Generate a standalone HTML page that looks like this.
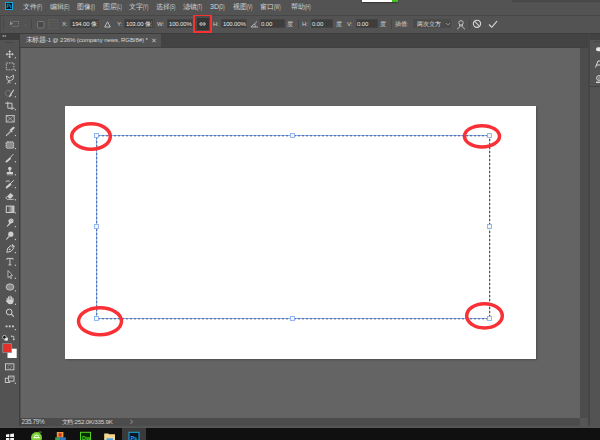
<!DOCTYPE html>
<html><head><meta charset="utf-8">
<style>
*{margin:0;padding:0;box-sizing:border-box}
html,body{width:600px;height:440px;overflow:hidden;background:#535353;font-family:"Liberation Sans",sans-serif;}
.a{position:absolute}
.t{position:absolute;white-space:nowrap;color:#d6d6d6;font-size:7px;line-height:8px}
.m{position:absolute;white-space:nowrap;color:#d4d4d4;font-size:7px;line-height:8px;top:3px}
.m span{font-size:6.5px;display:inline-block;transform:scaleX(0.62);transform-origin:0 50%;vertical-align:top}
.o{position:absolute;white-space:nowrap;color:#cfcfcf;font-size:6px;line-height:7px;top:20.5px;letter-spacing:-0.15px}
.o.v{color:#e6e6e6}
.inp{position:absolute;top:19px;height:9px;background:#3d3d3d;border:1px solid #444}
.sep{position:absolute;top:19px;width:1px;height:10px;background:#474747}
</style></head><body>
<!-- regions -->
<div class="a" style="left:0;top:0;width:600px;height:15px;background:#535353"></div>
<div class="a" style="left:0;top:15px;width:600px;height:1px;background:#474747"></div>
<div class="a" style="left:0;top:16px;width:600px;height:17px;background:#535353"></div>
<div class="a" style="left:0;top:16px;width:1px;height:17px;background:#4a4a4a"></div>
<div class="a" style="left:0;top:33px;width:600px;height:1px;background:#3c3c3c"></div>
<div class="a" style="left:20px;top:34px;width:569px;height:13px;background:#434343"></div>
<div class="a" style="left:20px;top:47px;width:569px;height:1px;background:#404040"></div>
<div class="a" style="left:0;top:34px;width:19px;height:392px;background:#535353"></div>
<div class="a" style="left:0;top:34px;width:19px;height:6px;background:#3e3e3e"></div>
<div class="a" style="left:19px;top:34px;width:1px;height:392px;background:#3e3e3e"></div>
<div class="a" style="left:20px;top:48px;width:560px;height:370px;background:#646464"></div>
<div class="a" style="left:20px;top:48px;width:1px;height:370px;background:#525252"></div>
<div class="a" style="left:580px;top:48px;width:8px;height:370px;background:#4c4c4c"></div><div class="a" style="left:580px;top:418px;width:8px;height:8px;background:#555"></div>
<div class="a" style="left:588px;top:34px;width:2px;height:392px;background:#454545"></div>
<div class="a" style="left:590px;top:34px;width:10px;height:392px;background:#535353"></div>
<div class="a" style="left:590px;top:34px;width:10px;height:6px;background:#424242"></div>
<div class="a" style="left:590px;top:86px;width:10px;height:1px;background:#424242"></div>
<div class="a" style="left:20px;top:418px;width:560px;height:8px;background:#4c4c4c"></div>
<div class="a" style="left:0;top:426px;width:600px;height:2px;background:#555"></div>
<div class="a" style="left:0;top:428px;width:600px;height:12px;background:#0f100f"></div>

<!-- rpanel icons -->
<svg class="a" style="left:588px;top:34px" width="12" height="60">
  <path d="M6 7.7 H12" stroke="#474747" stroke-width="1"/>
  <rect x="8" y="13.3" width="6" height="4" rx="2" fill="#e6e6e6"/>
  <path d="M7.5 33.5 L10 27 H12 M8.6 31 H12" stroke="#dcdcdc" stroke-width="1" fill="none"/>
  <circle cx="11" cy="44" r="2.4" fill="none" stroke="#d8d8d8" stroke-width="1"/>
  <path d="M11 42.5 V45.5" stroke="#d8d8d8" stroke-width="0.8"/>
  <rect x="8" y="47.6" width="5" height="1.3" fill="#e0e0e0"/>
</svg>
<!-- top overlay -->
<div class="a" style="left:362px;top:0;width:36px;height:1.5px;background:#fff;box-shadow:0 0.5px 1.5px rgba(0,0,0,.6)"></div>
<div class="a" style="left:392px;top:0;width:6px;height:1.5px;background:#3fc41c"></div>
<div class="a" style="left:512px;top:0;width:88px;height:1px;background:#4a4a4a;box-shadow:0 0.5px 1px rgba(0,0,0,.3)"></div>
<!-- toolbar -->
<svg class="a" style="left:0;top:0" width="20" height="440"><path d="M3.2 35 V37 M5.2 35 V37" stroke="#bbb" stroke-width="0.9"/><path d="M5 42.5 H14" stroke="#474747" stroke-width="1"/><g stroke="#cfcfcf" stroke-width="0.9" fill="none"><path d="M6.3 54.2 H13.1 M9.7 50.800000000000004 V57.800000000000004"/></g><g fill="#cfcfcf"><path d="M9.7 50.2 L8.2 51.900000000000006 H11.2Z M9.7 58.2 L8.2 56.5 H11.2Z M5.7 54.2 L7.4 52.7 V55.7Z M13.7 54.2 L12 52.7 V55.7Z"/></g><rect x="14.8" y="57.2" width="1.2" height="1.2" fill="#c4c4c4"/><rect x="6.3" y="63.0" width="7.6" height="6.8" fill="none" stroke="#cfcfcf" stroke-width="0.9" stroke-dasharray="1.5 1.1"/><rect x="14.8" y="69.7" width="1.2" height="1.2" fill="#c4c4c4"/><path d="M6.3 75.9 L9.4 77.9 L13.6 75.1 L13.2 79.1 L10.2 80.9 Q8.6 81.0 7.2 79.7 L6.3 75.9 M9.6 79.9 L7.6 83.5 M8.2 81.3 L10.6 83.1" fill="none" stroke="#cfcfcf" stroke-width="0.85"/><rect x="14.8" y="83.0" width="1.2" height="1.2" fill="#c4c4c4"/><circle cx="8.3" cy="93.3" r="2.9" fill="none" stroke="#a8a8a8" stroke-width="0.75" stroke-dasharray="1 0.8"/><path d="M10 95.5 L13.8 89.69999999999999" stroke="#cfcfcf" stroke-width="1.1"/><path d="M10.6 94.5 L9.6 96.69999999999999 L11.4 95.1Z" fill="#cfcfcf" stroke="#cfcfcf" stroke-width="1"/><rect x="14.8" y="96.2" width="1.2" height="1.2" fill="#c4c4c4"/><path d="M5.2 103.19999999999999 H12 V108.19999999999999 H14.4 M7.8 101.6 V108.19999999999999 H12 M12 108.19999999999999 V109.8" fill="none" stroke="#cfcfcf" stroke-width="0.95"/><rect x="14.8" y="109.0" width="1.2" height="1.2" fill="#c4c4c4"/><rect x="6.2" y="115.39999999999999" width="8" height="6.6" fill="none" stroke="#cfcfcf" stroke-width="0.85"/><path d="M6.2 115.39999999999999 L14.2 122.0 M14.2 115.39999999999999 L6.2 122.0" stroke="#b0b0b0" stroke-width="0.7"/><path d="M11.4 129.8 L13.6 127.80000000000001" stroke="#cfcfcf" stroke-width="2.2" stroke-linecap="round"/><path d="M9.9 129.60000000000002 L12.3 132.20000000000002" stroke="#cfcfcf" stroke-width="1.1"/><path d="M10.6 130.9 L6.6 134.9 L6.2 135.8 L7.1 135.4 L11.1 131.4" fill="none" stroke="#cfcfcf" stroke-width="0.9"/><rect x="14.8" y="134.89999999999998" width="1.2" height="1.2" fill="#c4c4c4"/><rect x="6.2" y="141.9" width="7.4" height="6.4" rx="1.3" fill="#8c8c8c" stroke="#cfcfcf" stroke-width="1.1" stroke-dasharray="1.3 0.7"/><rect x="14.8" y="148.0" width="1.2" height="1.2" fill="#c4c4c4"/><path d="M13.5 154 L9.3 158.6" stroke="#cfcfcf" stroke-width="0.9"/><path d="M9.8 158.1 L6 161.6 L6.5 162 L10.3 158.9Z" fill="#cfcfcf" stroke="#cfcfcf" stroke-width="1.1" stroke-linejoin="round"/><rect x="14.8" y="161.2" width="1.2" height="1.2" fill="#c4c4c4"/><circle cx="9.8" cy="168.6" r="1.8" fill="#cfcfcf"/><path d="M9.8 170 V172" stroke="#cfcfcf" stroke-width="1.2"/><rect x="6.8" y="172" width="6.2" height="2.2" fill="#cfcfcf"/><rect x="6.8" y="174.4" width="6.2" height="0.9" fill="#9a9a9a"/><rect x="14.8" y="174.2" width="1.2" height="1.2" fill="#c4c4c4"/><path d="M13.8 180.20000000000002 L9.6 184.4" stroke="#cfcfcf" stroke-width="1"/><path d="M10.2 183.8 L6.6 187.10000000000002 L6.4 187.8 L7.2 187.60000000000002 L10.8 184.60000000000002Z" fill="#cfcfcf" stroke="#cfcfcf" stroke-width="1.3" stroke-linejoin="round"/><path d="M5.8 181.60000000000002 Q7.6 180.4 9.6 181.20000000000002" stroke="#cfcfcf" stroke-width="1" fill="none"/><path d="M11.8 187.4 L13.9 185.0" stroke="#8f8f8f" stroke-width="0.8" stroke-dasharray="0.8 0.7"/><rect x="14.8" y="187.1" width="1.2" height="1.2" fill="#c4c4c4"/><path d="M10.5 192.9 L13.6 195.70000000000002 L10 199.10000000000002 L7 196.4 Z" fill="#cfcfcf"/><path d="M7 196.4 L5.8 197.9 L7.2 199.3 H13.8" stroke="#cfcfcf" stroke-width="0.9" fill="none"/><rect x="14.8" y="199.2" width="1.2" height="1.2" fill="#c4c4c4"/><defs><linearGradient id="gr" x1="0" x2="1"><stop offset="0" stop-color="#333"/><stop offset="1" stop-color="#d5d5d5"/></linearGradient></defs><rect x="6.3" y="206.10000000000002" width="7.6" height="6.4" fill="url(#gr)" stroke="#cfcfcf" stroke-width="1"/><rect x="14.8" y="212.29999999999998" width="1.2" height="1.2" fill="#c4c4c4"/><path d="M8.4 220.5 Q9.4 218.39999999999998 11.6 218.5 Q13.6 218.7 13.6 220.89999999999998 Q13.4 223.1 11.2 223.29999999999998 L7.2 226.79999999999998 L6.6 226.2 L9.3 222.89999999999998 Q8.2 221.89999999999998 8.4 220.5Z" fill="#cfcfcf"/><path d="M10 219.5 L11.2 221.89999999999998 M11.6 219.1 L12.6 221.29999999999998" stroke="#7a7a7a" stroke-width="0.5"/><rect x="14.8" y="226.0" width="1.2" height="1.2" fill="#c4c4c4"/><circle cx="10.8" cy="234.2" r="2.6" fill="#cfcfcf"/><path d="M9 236.3 L6.3 239.5" stroke="#cfcfcf" stroke-width="1.1"/><rect x="14.8" y="238.89999999999998" width="1.2" height="1.2" fill="#c4c4c4"/><path d="M6.8 252.29999999999998 L7.8 248.1 L11 245.5 L13.7 248.2 L11 251.39999999999998 Z" fill="none" stroke="#cfcfcf" stroke-width="1"/><circle cx="9.8" cy="249.29999999999998" r="0.9" fill="#cfcfcf"/><path d="M12 244.5 L14.5 247.1" stroke="#cfcfcf" stroke-width="1.2"/><rect x="14.8" y="252.0" width="1.2" height="1.2" fill="#c4c4c4"/><path d="M6.9 259.8 V258.40000000000003 H13 V259.8 M9.95 258.40000000000003 V265.0 M8.5 264.90000000000003 H11.4" stroke="#cfcfcf" stroke-width="0.95" fill="none"/><rect x="14.8" y="264.7" width="1.2" height="1.2" fill="#c4c4c4"/><path d="M8 270.5 L12.6 275.7 L10.4 275.7 L11.6 278.3 L10.6 278.7 L9.5 276.3 L8 277.7Z" fill="#3a3a3a" stroke="#cfcfcf" stroke-width="0.8"/><rect x="14.8" y="277.7" width="1.2" height="1.2" fill="#c4c4c4"/><ellipse cx="10" cy="287" rx="3.9" ry="3.2" fill="#8a8a8a" stroke="#cfcfcf" stroke-width="0.8"/><rect x="14.8" y="290.3" width="1.2" height="1.2" fill="#c4c4c4"/><path d="M7.2 301 V298.2 M8.6 300 V296.7 M10.1 300 V296.1 M11.6 300 V296.7 M13 300.6 V298.2" stroke="#cfcfcf" stroke-width="1.05" stroke-linecap="round"/><path d="M7.4 299.8 H13.4 V301.8 Q13.2 304.3 10.4 304.3 Q8.5 304.3 7.3 302.8 L5.8 300.8 Q6.4 299.8 7.4 300.6Z" fill="#cfcfcf"/><rect x="14.8" y="303.7" width="1.2" height="1.2" fill="#c4c4c4"/><circle cx="9.2" cy="312" r="2.9" fill="none" stroke="#cfcfcf" stroke-width="1"/><path d="M11.3 314.1 L13.8 316.6" stroke="#cfcfcf" stroke-width="1.2"/><path d="M5.6 326.4 H7.5 M8.8 326.4 H10.7 M12 326.4 H13.9" stroke="#cfcfcf" stroke-width="1.6"/><rect x="14.8" y="329.0" width="1.2" height="1.2" fill="#c4c4c4"/><rect x="4.6" y="337.6" width="3.2" height="3" fill="#f2f2f2"/><circle cx="4.4" cy="337.2" r="1.8" fill="#111" stroke="#e8e8e8" stroke-width="0.7"/><path d="M11.4 336.3 H13.8 V339.5" stroke="#d0d0d0" stroke-width="0.8" fill="none"/><path d="M12.6 339 L13.8 340.6 L15 339Z M12 335.1 L11 336.3 L12 337.5Z" fill="#d0d0d0"/><rect x="7.5" y="348.7" width="9.2" height="9.3" fill="#ffffff"/><rect x="2.7" y="343.6" width="8.9" height="8.9" fill="#e3312a" stroke="#8a8f8f" stroke-width="0.8"/><rect x="5.5" y="363.8" width="8.4" height="6" fill="none" stroke="#cfcfcf" stroke-width="0.9"/><circle cx="9.7" cy="366.8" r="1.8" fill="none" stroke="#b0b0b0" stroke-width="0.8" stroke-dasharray="0.8 0.7"/><rect x="5.3" y="378.2" width="4.4" height="4.3" fill="none" stroke="#cfcfcf" stroke-width="0.9"/><rect x="8.4" y="376.1" width="5.6" height="5" fill="#535353" stroke="#cfcfcf" stroke-width="0.9"/><path d="M9 377.9 H13.4" stroke="#9a9a9a" stroke-width="0.9"/><rect x="14.8" y="382.7" width="1.2" height="1.2" fill="#c4c4c4"/></svg>
<!-- /toolbar -->
<!-- menu -->
<div class="a" style="left:5px;top:2px;width:8px;height:8px;background:#061820;border:1px solid #1aa3dc"></div>
<svg class="a" style="left:6px;top:3px" width="6" height="6"><path d="M1.2 5 V1.2 H2.6 Q3.6 1.2 3.6 2.2 Q3.6 3.2 2.6 3.2 H1.2 M5.2 2.4 Q4.2 2.2 4.2 3 Q4.4 3.6 5 3.8 Q5.4 4.6 4.2 4.8" fill="none" stroke="#1aa8e0" stroke-width="0.8"/></svg>
<div class="m" style="left:23px">文件<span>(F)</span></div>
<div class="m" style="left:50px">编辑<span>(E)</span></div>
<div class="m" style="left:77px">图像<span>(I)</span></div>
<div class="m" style="left:103px">图层<span>(L)</span></div>
<div class="m" style="left:129px">文字<span>(Y)</span></div>
<div class="m" style="left:156px">选择<span>(S)</span></div>
<div class="m" style="left:183px">滤镜<span>(T)</span></div>
<div class="m" style="left:210px">3D<span>(D)</span></div>
<div class="m" style="left:233px">视图<span>(V)</span></div>
<div class="m" style="left:260px">窗口<span>(W)</span></div>
<div class="m" style="left:291px">帮助<span>(H)</span></div>

<!-- options bar -->
<div class="sep" style="left:3px"></div>
<div class="sep" style="left:31px"></div>
<div class="sep" style="left:154px"></div>
<div class="sep" style="left:246px"></div>
<div class="sep" style="left:298px"></div>
<div class="sep" style="left:391px"></div>
<div class="sep" style="left:469px"></div>
<svg class="a" style="left:0;top:15px" width="600" height="17">
  <g fill="none" stroke="#8a8a8a" stroke-width="0.9">
    <path d="M10 6.3 L10 10.5 L13.2 8.4 Z" fill="#8f8f8f" stroke="none"/>
    <path d="M12.5 6.5 H18.5 M12.5 11.5 H18.5 M18.5 6 V12" stroke-dasharray="1 1"/>
    <path d="M24 9.5 L25.5 10.8 L27 9.5" stroke="#626262"/>
    <rect x="37.5" y="6.5" width="6.5" height="6.5" rx="0.8" fill="#4a4a4a" stroke="#7c7c7c"/>
    <rect x="48.5" y="4.5" width="9" height="9" stroke="#666" stroke-dasharray="1 1"/>
    <path d="M51.5 5 V13 M54.5 5 V13 M49 7.5 H57 M49 10.5 H57" stroke="#5e5e5e" stroke-dasharray="1 1"/>
  </g>
</svg>
<div class="o" style="left:62px">X:</div>
<div class="inp" style="left:70px;width:29px"></div>
<div class="o v" style="left:72px;width:26px;overflow:hidden">194.00 像素</div>
<svg class="a" style="left:104px;top:21px" width="7" height="7"><path d="M3.5 0.8 L6.3 6 H0.7 Z" fill="none" stroke="#bdbdbd" stroke-width="1"/></svg>
<div class="o" style="left:117px">Y:</div>
<div class="inp" style="left:124px;width:29px"></div>
<div class="o v" style="left:126px;width:26px;overflow:hidden">103.00 像素</div>
<div class="o" style="left:157px">W:</div>
<div class="inp" style="left:167px;width:26px"></div>
<div class="o v" style="left:169px">100.00%</div>
<div class="a" style="left:193px;top:15px;width:19px;height:18px;border:2px solid #fb3030"></div>
<div class="a" style="left:195px;top:16px;width:15px;height:15px;border:1px solid #474c4c;background:#4a4a4a"></div>
<div class="a" style="left:197px;top:18px;width:11.5px;height:12px;background:#343434"></div>
<svg class="a" style="left:199px;top:22px" width="8" height="4"><g fill="none" stroke="#dcdcdc" stroke-width="0.9"><path d="M3.2 0.9 H1.8 Q0.8 0.9 0.8 2 Q0.8 3.1 1.8 3.1 H3.2 M4.2 0.9 H5 Q6.4 0.9 6.4 2 Q6.4 3.1 5 3.1 H4.2 M2.5 2 H4.6"/></g></svg>
<div class="o" style="left:213px">H:</div>
<div class="inp" style="left:221px;width:25px"></div>
<div class="o v" style="left:223px">100.00%</div>
<svg class="a" style="left:250px;top:20px" width="9" height="8"><path d="M1 7 H8 M1 7 L7 1.5 M4.5 4 Q5.5 5.5 5.2 7" fill="none" stroke="#bdbdbd" stroke-width="0.9"/></svg>
<div class="inp" style="left:260px;width:25px"></div>
<div class="o v" style="left:261px">0.00</div>
<div class="o" style="left:287px">度</div>
<div class="o" style="left:302px">H:</div>
<div class="inp" style="left:311px;width:22px"></div>
<div class="o v" style="left:312px">0.00</div>
<div class="o" style="left:336px">度</div>
<div class="o" style="left:347px">V:</div>
<div class="inp" style="left:356px;width:22px"></div>
<div class="o v" style="left:357px">0.00</div>
<div class="o" style="left:380px">度</div>
<div class="o" style="left:395px">插值:</div>
<div class="inp" style="left:413px;width:38px;background:#4a4a4a;border-color:#4a4a4a"></div>
<div class="o v" style="left:417px">两次立方</div>
<svg class="a" style="left:445px;top:22px" width="6" height="4"><path d="M1 1 L3 3 L5 1" fill="none" stroke="#9a9a9a" stroke-width="0.8"/></svg>
<svg class="a" style="left:456px;top:20px" width="11" height="10"><g fill="none" stroke="#c8c8c8" stroke-width="0.9"><circle cx="5" cy="2.8" r="2.2"/><path d="M3.5 4.5 L3.5 6 H6.5 V4.5 M1 9.3 L4 6.5 M9 9.3 L6 6.5"/></g></svg>
<svg class="a" style="left:472px;top:19px" width="10" height="10"><g fill="none" stroke="#d8d8d8" stroke-width="1.1"><circle cx="5" cy="4.8" r="3.6"/><path d="M2.6 2.4 L7.4 7.2"/></g></svg>
<svg class="a" style="left:488px;top:20px" width="10" height="9"><path d="M1 4.5 L3.8 7.3 L9 1.2" fill="none" stroke="#dcdcdc" stroke-width="1.1"/></svg>

<!-- tab -->
<div class="a" style="left:20px;top:34px;width:141px;height:13px;background:#535353"></div>
<div class="t" style="left:25.6px;top:36px;color:#d8d8d8;font-size:6px;line-height:8px;letter-spacing:-0.07px"><span style="font-size:7px;letter-spacing:-0.3px">未标题</span>-1 @ 236% (company news, RGB/8#) *</div>
<svg class="a" style="left:151px;top:38px" width="6" height="5"><path d="M1.3 0.8 L4.7 4.2 M4.7 0.8 L1.3 4.2" stroke="#c8c8c8" stroke-width="1"/></svg>

<!-- document -->
<div class="a" style="left:65px;top:106px;width:471px;height:253px;background:#fff;box-shadow:0.5px 1px 2px rgba(0,0,0,.25)"></div>

<svg class="a" style="left:0;top:0" width="600" height="440">
  <g shape-rendering="crispEdges" fill="none" stroke-width="1">
    <path d="M96 135.5 H490 M96 318.5 H490 M96.5 135 V319" stroke="#86acf2"/><path d="M489.5 135 V319" stroke="#bcd2f8"/>
    <path d="M94 136.5 H490 M94 319.5 H490" stroke="#cdcdcd" stroke-dasharray="2 2"/>
    <path d="M97.5 133 V319 M490.5 135 V319" stroke="#cfcfcf" stroke-dasharray="2 2"/>
    <path d="M94 135.5 H490 M94 318.5 H490" stroke="#5874aa" stroke-dasharray="2 2"/>
    <path d="M96.5 133 V319" stroke="#5b76a6" stroke-dasharray="2 2"/>
    <path d="M489.5 135 V319" stroke="#44557c" stroke-dasharray="2 2"/>
  </g>
  <g fill="#f6f6ee" stroke="#8ab2f4" stroke-width="0.9">
    <rect x="94.5" y="133.5" width="4" height="4"/>
    <rect x="290.5" y="133.5" width="4" height="4"/>
    <rect x="487.5" y="133.5" width="4" height="4"/>
    <rect x="94.5" y="224.5" width="4" height="4"/>
    <rect x="487.5" y="224.5" width="4" height="4"/>
    <rect x="94.5" y="316.5" width="4" height="4"/>
    <rect x="290.5" y="316.5" width="4" height="4"/>
    <rect x="487.5" y="316.5" width="4" height="4"/>
  </g>
  <g fill="none" stroke="#f93036" stroke-width="3.5">
    <ellipse cx="91" cy="136.5" rx="19.3" ry="12.8"/>
    <ellipse cx="482" cy="136.3" rx="17.5" ry="10.6"/>
    <ellipse cx="100" cy="321.2" rx="21.5" ry="13.5"/>
    <ellipse cx="484.5" cy="315.8" rx="17.8" ry="12.1"/>
  </g>
</svg>

<!-- status bar -->
<div class="a" style="left:20px;top:418px;width:25px;height:8px;background:#474747"></div>
<div class="t" style="left:21.5px;top:417.5px;color:#d4d4d4;font-size:6.4px;line-height:8px;letter-spacing:-0.35px">235.79%</div>
<div class="t" style="left:61.5px;top:417.5px;color:#d4d4d4;font-size:6.2px;line-height:8px;letter-spacing:-0.22px">文档:252.0K/335.9K</div>
<svg class="a" style="left:129px;top:419px" width="5" height="6"><path d="M1.5 0.8 L3.5 2.8 L1.5 4.8" fill="none" stroke="#aaa" stroke-width="0.8"/></svg>

<!-- taskbar -->
<div class="a" style="left:122px;top:428px;width:24px;height:12px;background:#3a3a3a"></div>
<svg class="a" style="left:0;top:428px" width="600" height="12">
  <g fill="#f2f2f2">
    <path d="M6 6.6 L9.3 6.1 V9 H6Z M10.2 6 L14 5.4 V9 H10.2Z M6 9.9 H9.3 V12 H6Z M10.2 9.9 H14 V12 H10.2Z"/>
  </g>
  <circle cx="36.5" cy="9.6" r="5.5" fill="#7dcf36"/>
  <path d="M38 4.6 Q40 3.6 41.5 4.2" stroke="#6cc02a" stroke-width="0.9" fill="none"/>
  <path d="M33.4 9.6 H39.6 M34.2 8.4 Q36.5 5.6 38.8 8.4" stroke="#f4fff0" stroke-width="1.1" fill="none"/>
  <rect x="56.8" y="4" width="6.6" height="5.6" fill="#ee9a3c"/>
  <rect x="58.6" y="5.2" width="3" height="3.4" fill="#c8322a"/>
  <rect x="55.2" y="9.4" width="5" height="2.6" fill="#3aa35a"/>
  <rect x="60.2" y="9.4" width="5.6" height="2.6" fill="#2a7ad0"/>
  <rect x="80.5" y="4.3" width="10" height="8" fill="#0a2a06" stroke="#53d41c" stroke-width="1"/>
  <text x="82" y="11.6" font-family="Liberation Sans" font-size="5.5" font-weight="bold" fill="#53d41c">Dw</text>
  <path d="M104.2 5.5 H108.2 L109 6.3 H115 V12 H104.2Z" fill="#f4d890"/>
  <rect x="106.5" y="10.3" width="6.5" height="1.7" fill="#41a4e8"/>
  <rect x="129" y="4.3" width="10" height="8" fill="#061824" stroke="#1ca8e4" stroke-width="1"/>
  <text x="130.4" y="11.6" font-family="Liberation Sans" font-size="5.5" font-weight="bold" fill="#1ca8e4">Ps</text>
</svg>
</body></html>
